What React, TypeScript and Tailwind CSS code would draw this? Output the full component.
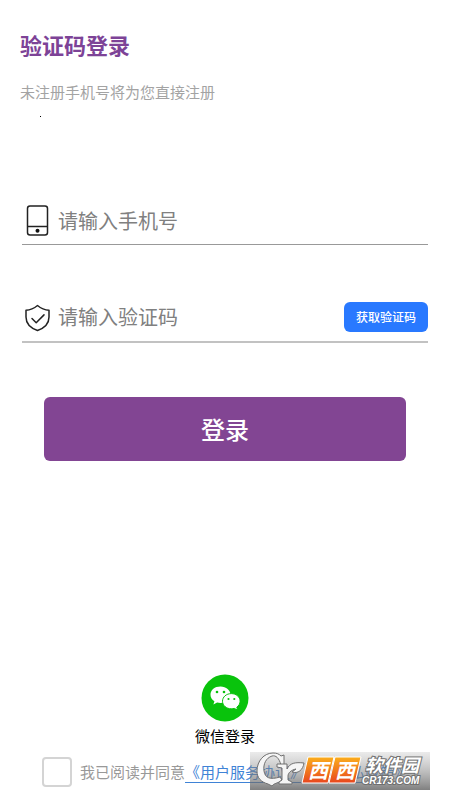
import { useState } from "react";

export default function App() {
  const [phone, setPhone] = useState("");
  const [code, setCode] = useState("");
  const [agreed, setAgreed] = useState(false);

  return (
    <main className="flex min-h-screen flex-col bg-white font-['Noto_Sans_CJK_SC','Noto_Sans',sans-serif]">
      <header className="px-5 pt-7">
        <h1 className="text-[22px] leading-8 font-bold text-[#7d4397]">验证码登录</h1>
        <p className="mt-5 text-[15px] leading-6 text-[#a3a3a3]">未注册手机号将为您直接注册</p>
        <div className="mt-3 ml-5 h-px w-px bg-black" />
      </header>

      <form className="mt-20 flex flex-col px-[22px]" onSubmit={(e) => e.preventDefault()}>
        <div className="flex h-12 items-center gap-2 border-b border-[#999999]">
          <PhoneIcon className="h-8 w-7 shrink-0" />
          <input
            type="tel"
            aria-label="手机号"
            placeholder="请输入手机号"
            value={phone}
            onChange={(e) => setPhone(e.target.value)}
            className="min-w-0 flex-1 bg-transparent text-[20px] leading-8 outline-none placeholder:text-[#808080]"
          />
        </div>

        <div className="mt-12 flex h-[50px] items-center gap-2 border-b-2 border-[#c2c2c2]">
          <ShieldIcon className="h-8 w-7 shrink-0" />
          <input
            type="text"
            aria-label="验证码"
            placeholder="请输入验证码"
            value={code}
            onChange={(e) => setCode(e.target.value)}
            className="min-w-0 flex-1 bg-transparent text-[20px] leading-8 outline-none placeholder:text-[#808080]"
          />
          <button type="button" className="h-[30px] rounded-md bg-[#2979ff] px-3 text-[12px] font-medium text-white">
            获取验证码
          </button>
        </div>

        <button
          type="submit"
          className="mx-[22px] mt-[54px] h-16 rounded-md bg-[#824593] text-[24px] font-medium text-white"
        >
          登录
        </button>
      </form>

      <footer className="mt-auto flex flex-col pb-[10px]">
        <button type="button" className="flex flex-col items-center self-center">
          <WechatIcon className="size-12" />
          <span className="mt-1 text-[15px] leading-5 text-black">微信登录</span>
        </button>

        <div className="relative mt-2 flex h-9 items-center gap-2 pl-[42px]">
          <input
            id="agree"
            type="checkbox"
            checked={agreed}
            onChange={(e) => setAgreed(e.target.checked)}
            className="size-[30px] shrink-0 appearance-none rounded border-2 border-[#d4d4d4] checked:bg-[#824593]"
          />
          <p className="text-[15px] leading-5 whitespace-nowrap text-[#999999]">
            <label htmlFor="agree">我已阅读并同意</label>
            <a href="#terms" className="text-[#3f83d6] underline underline-offset-4">
              《用户服务协议》及《隐私政策》
            </a>
          </p>
          <Watermark className="absolute right-5 bottom-0 h-[38px] w-[180px]" />
        </div>
      </footer>
    </main>
  );
}

function PhoneIcon({ className }: { className?: string }) {
  return (
    <svg className={className} viewBox="0 0 28 32" fill="none" stroke="#222" strokeWidth="1.5">
      <rect x="5.5" y="1" width="20" height="29" rx="2.5" />
      <path d="M5.5 21.5h20" />
      <circle cx="15.5" cy="25.8" r="2" fill="#111" stroke="none" />
    </svg>
  );
}

function ShieldIcon({ className }: { className?: string }) {
  return (
    <svg
      className={className}
      viewBox="0 0 28 32"
      fill="none"
      stroke="#222"
      strokeWidth="1.5"
      strokeLinecap="round"
      strokeLinejoin="round"
    >
      <path d="M15.500 4.500C12.500 7 8.500 9 4 9.200V16c0 6.500 4.500 11 11.500 13.500C22.500 27 27 22.500 27 16V9.200C22.500 9 18.500 7 15.500 4.500Z" />
      <path d="m10 17.500 4.200 4.200 7.800-7.800" />
    </svg>
  );
}

function WechatIcon({ className }: { className?: string }) {
  return (
    <svg className={className} viewBox="0 0 48 48">
      <circle cx="24" cy="24" r="23.5" fill="#09c30c" />
      <path
        fill="#fff"
        d="M19.500 12.500C13.700 12.500 9.500 16 9.500 20.700c0 2.700 1.500 5 3.900 6.500l-1 3.200 3.700-1.900c1.100.300 2.200.400 3.400.400 5.700 0 10-3.700 10-8.200s-4.300-8.200-10-8.200Z"
      />
      <path
        fill="#fff"
        stroke="#09c30c"
        d="M30.300 19.600c-5 0-8.800 3.400-8.800 7.600s3.800 7.600 8.800 7.600c1.100 0 2.100-.200 3-.400l3.300 1.700-.800-2.900c2-1.400 3.300-3.500 3.300-6 0-4.200-3.900-7.600-8.800-7.600Z"
      />
      <g fill="#09c30c">
        <circle cx="16" cy="18" r="1.3" />
        <circle cx="23" cy="18" r="1.3" />
        <circle cx="27.5" cy="25" r="1.1" />
        <circle cx="33.3" cy="25" r="1.1" />
      </g>
    </svg>
  );
}

function Watermark({ className }: { className?: string }) {
  return (
    <svg className={className} viewBox="0 0 180 38">
      <defs>
        <linearGradient id="shade" x1="0" y1="0" x2="0" y2="1">
          <stop offset="0" stopColor="#999" stopOpacity="0.2" />
          <stop offset="0.5" stopColor="#808080" stopOpacity="0.5" />
          <stop offset="1" stopColor="#606060" stopOpacity="0.8" />
        </linearGradient>
        <linearGradient id="orange" x1="0" y1="0" x2="0" y2="1">
          <stop offset="0" stopColor="#fbae1c" />
          <stop offset="1" stopColor="#e8461e" />
        </linearGradient>
      </defs>
      <rect width="180" height="38" fill="url(#shade)" />
      <g fill="#f5f5f5" stroke="#707070" strokeLinejoin="round">
        <path d="M34 3v10h-3C29 6 26 3 22 4c-6 2-9 8-8 15 1 7 6 9 16 6l2 3C27 32 24 31 22 34l-4-2C11 30 7 26 7 19 7 9 14 1 23 1c4 0 6 1 8 3Z" />
        <path d="M27 12h10v5c3-6 8-7 17-6-1 7-6 11-12 9l4-3c-5 1-8 4-8 7v4l4 2v2H29v-2l3-2V16l-5-1Z" />
      </g>
      <g fill="url(#orange)" stroke="#fff">
        <path d="M58 5h26l-6 26H52Z" />
        <path d="M85 5h26l-6 26H79Z" />
      </g>
      <g fontFamily="'Noto Sans CJK SC', sans-serif" fontWeight="700" fontStyle="italic" fill="#fff">
        <text x="58" y="26" fontSize="20">西</text>
        <text x="85" y="26" fontSize="20">西</text>
        <g stroke="#707070" strokeWidth="2" paintOrder="stroke">
          <text x="115" y="20" fontSize="18">软件园</text>
          <text x="112" y="32" fontSize="10" fontFamily="'Liberation Sans', sans-serif">
            CR173.COM
          </text>
        </g>
      </g>
    </svg>
  );
}
